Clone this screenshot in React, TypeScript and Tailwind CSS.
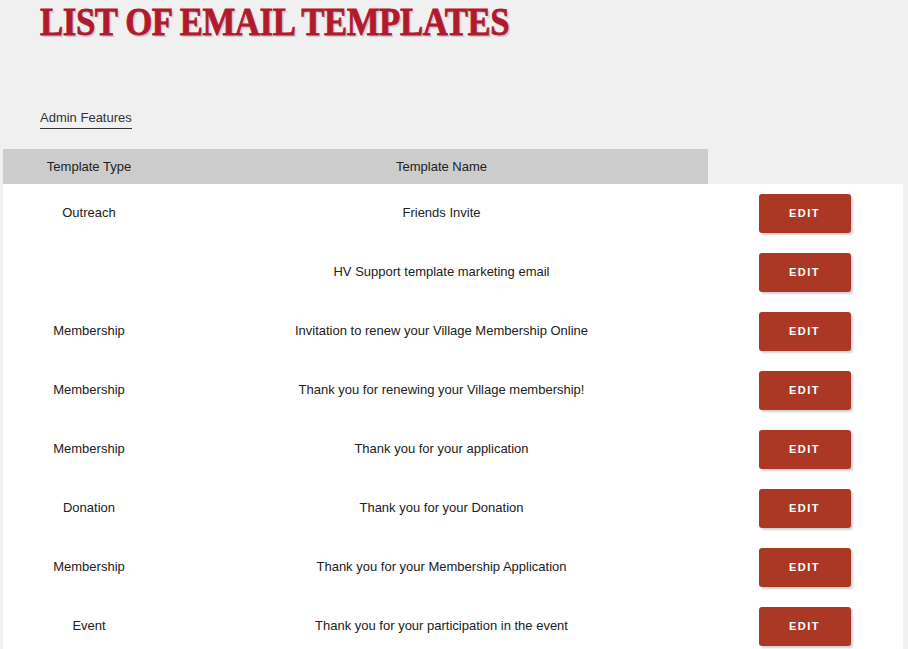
const rows: { type: string; name: string }[] = [
  { type: "Outreach", name: "Friends Invite" },
  { type: "", name: "HV Support template marketing email" },
  { type: "Membership", name: "Invitation to renew your Village Membership Online" },
  { type: "Membership", name: "Thank you for renewing your Village membership!" },
  { type: "Membership", name: "Thank you for your application" },
  { type: "Donation", name: "Thank you for your Donation" },
  { type: "Membership", name: "Thank you for your Membership Application" },
  { type: "Event", name: "Thank you for your participation in the event" },
];

export default function App() {
  return (
    <div
      className="min-h-[649px] w-[908px] overflow-hidden bg-[#f0f0f0] text-[13px] text-[#222]"
      style={{ fontFamily: '"Liberation Sans", Arial, sans-serif' }}
    >
      <div className="h-[44px] pl-[40px]">
        <h1
          className="inline-block origin-left scale-x-[0.87] whitespace-nowrap text-[40px] font-bold leading-[44px] tracking-[-0.5px] text-[#b01a2c] [-webkit-text-stroke:0.8px_#b01a2c] [text-shadow:2px_2px_1px_#c9c9d4]"
          style={{ fontFamily: '"Liberation Serif", "Times New Roman", serif' }}
        >
          LIST OF EMAIL TEMPLATES
        </h1>
      </div>

      <div className="pl-[40px] pt-[64px]">
        <span className="inline-block border-b border-[#333] pb-[3px] leading-[15px] text-[#333]">
          Admin Features
        </span>
      </div>

      <div className="ml-[3px] mt-[20px] w-[900px]">
        <div className="flex h-[35px] w-[705px] items-center bg-[#cccccc] text-[#222]">
          <div className="w-[172px] text-center">Template Type</div>
          <div className="w-[533px] text-center">Template Name</div>
        </div>
        <div className="bg-white">
          {rows.map((r, i) => (
            <div key={i} className="flex h-[59px] items-center">
              <div className="w-[172px] pb-[2px] text-center">{r.type}</div>
              <div className="w-[533px] pb-[2px] text-center">{r.name}</div>
              <div className="flex w-[193px] justify-center">
                <button className="h-[39px] w-[92px] rounded-[3px] bg-[#ab3825] text-[11px] font-bold tracking-[1.5px] text-white shadow-[2px_2px_2px_rgba(0,0,0,0.18)]">
                  EDIT
                </button>
              </div>
            </div>
          ))}
        </div>
      </div>
    </div>
  );
}
